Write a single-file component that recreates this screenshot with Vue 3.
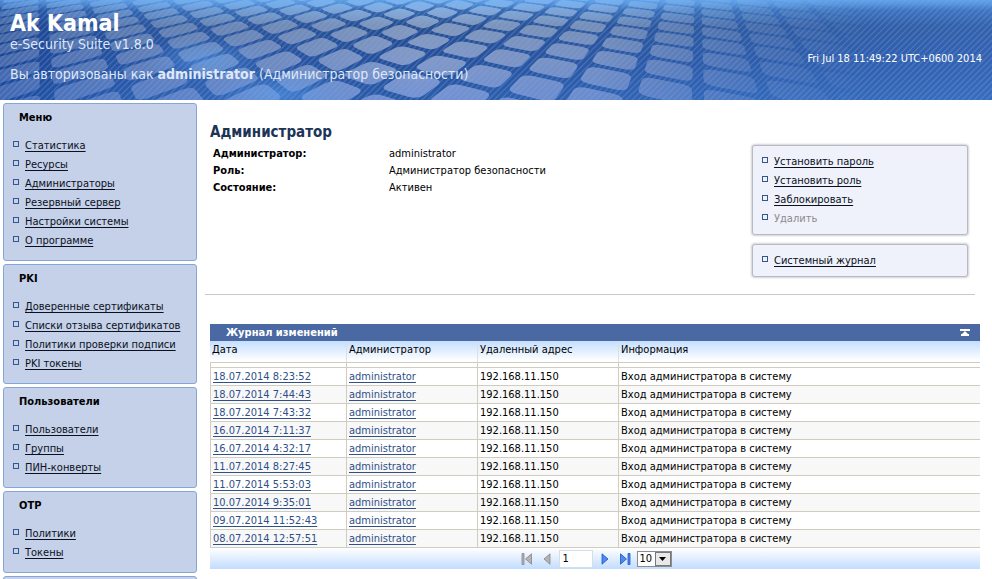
<script setup>
import { ref } from 'vue'

const groups = [
  { title: 'Меню', items: ['Статистика', 'Ресурсы', 'Администраторы', 'Резервный сервер', 'Настройки системы', 'О программе'] },
  { title: 'PKI', items: ['Доверенные сертификаты', 'Списки отзыва сертификатов', 'Политики проверки подписи', 'PKI токены'] },
  { title: 'Пользователи', items: ['Пользователи', 'Группы', 'ПИН-конверты'] },
  { title: 'OTP', items: ['Политики', 'Токены'] },
  { title: '', items: [] },
]

const details = [
  ['Администратор:', 'administrator'],
  ['Роль:', 'Администратор безопасности'],
  ['Состояние:', 'Активен'],
]

const actions = ['Установить пароль', 'Установить роль', 'Заблокировать']

const dates = [
  '18.07.2014 8:23:52', '18.07.2014 7:44:43', '18.07.2014 7:43:32', '16.07.2014 7:11:37', '16.07.2014 4:32:17',
  '11.07.2014 8:27:45', '11.07.2014 5:53:03', '10.07.2014 9:35:01', '09.07.2014 11:52:43', '08.07.2014 12:57:51',
]

const page = ref('1')
const size = ref('10')

// Perspective floor of rounded tiles: two fans of lines, one per vanishing point.
const point = (a, b) => {
  const m = b * 0.335
  const k = 0.05 + 0.4 * a + 0.33 * Math.max(0, m + 1.9)
  const d = 661 / (k - m)
  return [37 + k * d, d - 105]
}
const mix = (p, q, t) => [p[0] + (q[0] - p[0]) * t, p[1] + (q[1] - p[1]) * t]
const fmt = (p) => p[0].toFixed(1) + ' ' + p[1].toFixed(1)
const tiles = []
for (let a = -2; a < 20; a++) {
  for (let b = -20; b < 5; b++) {
    const g = 0.09
    const c = [point(a + g, b + g), point(a + 1 - g, b + g), point(a + 1 - g, b + 1 - g), point(a + g, b + 1 - g)]
    if (c.some((p) => !(p[1] > -12 && p[1] < 220 && p[0] > -150 && p[0] < 1050))) continue
    let d = ''
    c.forEach((p, i) => {
      const prev = c[(i + 3) % 4]
      const next = c[(i + 1) % 4]
      d += (i ? 'L' : 'M') + fmt(mix(p, prev, 0.25)) + 'Q' + fmt(p) + ' ' + fmt(mix(p, next, 0.25))
    })
    tiles.push(d + 'Z')
  }
}
</script>

<template>
  <div class="shell">
    <header class="banner">
      <svg class="art" viewBox="0 0 992 100" preserveAspectRatio="xMinYMin slice" aria-hidden="true">
        <defs>
          <linearGradient id="sky" x1="0" y1="0" x2="0" y2="1">
            <stop offset="0" stop-color="#5c9ce2" />
            <stop offset="0.1" stop-color="#4177bd" />
            <stop offset="0.26" stop-color="#30589b" />
            <stop offset="0.6" stop-color="#2f5aa6" />
            <stop offset="1" stop-color="#3669b8" />
          </linearGradient>
          <linearGradient id="side" x1="0" y1="0" x2="1" y2="0">
            <stop offset="0" stop-color="#0c3284" stop-opacity="0.55" />
            <stop offset="0.2" stop-color="#1c4796" stop-opacity="0.15" />
            <stop offset="0.4" stop-color="#0c2c6c" stop-opacity="0.25" />
            <stop offset="0.75" stop-color="#2a62b4" stop-opacity="0.2" />
            <stop offset="1" stop-color="#3d72c4" stop-opacity="0.35" />
          </linearGradient>
          <linearGradient id="fade" x1="0" y1="0" x2="1" y2="0">
            <stop offset="0" stop-color="#fff" stop-opacity="0.42" />
            <stop offset="0.25" stop-color="#fff" stop-opacity="0.75" />
            <stop offset="0.42" stop-color="#fff" stop-opacity="1" />
            <stop offset="0.6" stop-color="#fff" stop-opacity="0.85" />
            <stop offset="0.76" stop-color="#fff" stop-opacity="0.3" />
            <stop offset="0.88" stop-color="#fff" stop-opacity="0" />
          </linearGradient>
          <linearGradient id="tile" gradientUnits="userSpaceOnUse" x1="0" y1="0" x2="0" y2="100">
            <stop offset="0" stop-color="#8bbcf2" />
            <stop offset="0.25" stop-color="#8498ba" />
            <stop offset="0.6" stop-color="#8499c6" />
            <stop offset="1" stop-color="#7492d2" />
          </linearGradient>
          <radialGradient id="glow">
            <stop offset="0" stop-color="#5da6f5" stop-opacity="0.45" />
            <stop offset="1" stop-color="#5da6f5" stop-opacity="0" />
          </radialGradient>
          <linearGradient id="shine" x1="0" y1="0" x2="0" y2="1">
            <stop offset="0" stop-color="#6cb0f4" stop-opacity="0.6" />
            <stop offset="1" stop-color="#6cb0f4" stop-opacity="0" />
          </linearGradient>
          <mask id="edge"><rect width="992" height="100" fill="url(#fade)" /></mask>
          <pattern id="hatch" width="6" height="6" patternUnits="userSpaceOnUse">
            <path d="M-1 1 1 -1M0 6 6 0M5 7 7 5" stroke="#7aaaf0" stroke-width="1.3" stroke-opacity="0.3" />
          </pattern>
        </defs>
        <rect width="992" height="100" fill="url(#sky)" />
        <rect width="992" height="100" fill="url(#side)" />
        <g mask="url(#edge)" fill="url(#tile)">
          <path v-for="(d, i) in tiles" :key="i" :d="d" />
        </g>
        <ellipse cx="205" cy="60" rx="60" ry="22" fill="url(#glow)" />
        <ellipse cx="280" cy="94" rx="70" ry="24" fill="url(#glow)" />
        <rect width="992" height="10" fill="url(#shine)" />
        <rect width="992" height="100" fill="url(#hatch)" />
      </svg>
      <div class="brand">
        <h1>Ak Kamal</h1>
        <p>e-Security Suite v1.8.0</p>
        <p class="auth">Вы авторизованы как <b>administrator</b> (Администратор безопасности)</p>
      </div>
      <time class="clock">Fri Jul 18 11:49:22 UTC+0600 2014</time>
    </header>

    <div class="body">
      <nav class="side">
        <section v-for="(g, i) in groups" :key="i" class="group">
          <h2>{{ g.title }}</h2>
          <ul class="links">
            <li v-for="t in g.items" :key="t"><a href="#">{{ t }}</a></li>
          </ul>
        </section>
      </nav>

      <main class="main">
        <div class="top">
          <section class="info">
            <h2>Администратор</h2>
            <dl>
              <template v-for="d in details" :key="d[0]">
                <dt>{{ d[0] }}</dt>
                <dd>{{ d[1] }}</dd>
              </template>
            </dl>
          </section>
          <aside class="actions">
            <ul class="links card">
              <li v-for="t in actions" :key="t"><a href="#">{{ t }}</a></li>
              <li class="off">Удалить</li>
            </ul>
            <ul class="links card">
              <li><a href="#">Системный журнал</a></li>
            </ul>
          </aside>
        </div>

        <section class="log">
          <div class="bar">
            <h3>Журнал изменений</h3>
            <button type="button" aria-label="Свернуть">
              <svg width="10" height="8" viewBox="0 0 10 8"><path d="M0 0h10v2H0zM5 2 8 5h1v2H1V5h1z" fill="#fff" /></svg>
            </button>
          </div>
          <table>
            <colgroup><col class="c1" /><col class="c2" /><col class="c3" /><col /></colgroup>
            <thead>
              <tr><th>Дата</th><th>Администратор</th><th>Удаленный адрес</th><th>Информация</th></tr>
            </thead>
            <tbody>
              <tr class="gap"><td></td><td></td><td></td><td></td></tr>
              <tr v-for="d in dates" :key="d" class="row">
                <td><a href="#">{{ d }}</a></td>
                <td><a href="#">administrator</a></td>
                <td>192.168.11.150</td>
                <td>Вход администратора в систему</td>
              </tr>
            </tbody>
          </table>
          <div class="pager">
            <button type="button" aria-label="Первая" disabled>
              <svg width="12" height="12" viewBox="0 0 12 12"><path d="M1 .5h2v11H1zM10.500.8v10.400L4.500 6z" fill="#b4b4b4" stroke="#858585" stroke-width=".8" /></svg>
            </button>
            <button type="button" aria-label="Предыдущая" disabled>
              <svg width="12" height="12" viewBox="0 0 12 12"><path d="M9 .8v10.400L3 6z" fill="#b4b4b4" stroke="#858585" stroke-width=".8" /></svg>
            </button>
            <input v-model="page" type="text" aria-label="Страница" />
            <button type="button" aria-label="Следующая">
              <svg width="12" height="12" viewBox="0 0 12 12"><path d="M3 .8v10.400L9 6z" fill="#4f8bef" stroke="#1d55c4" stroke-width=".8" /></svg>
            </button>
            <button type="button" aria-label="Последняя">
              <svg width="12" height="12" viewBox="0 0 12 12"><path d="M1.500.8v10.400L7.500 6zM9 .5h2v11H9z" fill="#4f8bef" stroke="#1d55c4" stroke-width=".8" /></svg>
            </button>
            <span class="size">
              <select v-model="size" aria-label="Строк на странице"><option>10</option><option>20</option><option>50</option></select>
              <span class="drop"><svg width="7" height="4" viewBox="0 0 7 4"><path d="M0 0h7L3.500 4z" fill="#000" /></svg></span>
            </span>
          </div>
        </section>
      </main>
    </div>
  </div>
</template>

<style>
body {
  background: #fff;
}
</style>

<style scoped>
.shell {
  height: 100vh;
  overflow: hidden;
  font: 11px/18px Tahoma, "DejaVu Sans Condensed", "DejaVu Sans", sans-serif;
  color: #000;
}
.shell * {
  box-sizing: border-box;
}
h1, h2, h3, p, ul, dl, dd {
  margin: 0;
  padding: 0;
}
button {
  display: flex;
  justify-content: center;
  padding: 0;
  border: 0;
  background: none;
}
.banner {
  position: relative;
  display: flex;
  justify-content: space-between;
  align-items: flex-start;
  min-height: 100px;
  padding: 10px;
  background: #3a6ab8;
}
.art {
  position: absolute;
  inset: 0;
  width: 100%;
  height: 100%;
}
.brand {
  position: relative;
  color: #dfe8f8;
  font-size: 14px;
}
.brand h1 {
  color: #fff;
  font-size: 23px;
  line-height: 26px;
}
.brand p {
  line-height: 16px;
}
.brand .auth {
  padding-top: 14px;
}
.clock {
  position: relative;
  padding-top: 40px;
  color: #fff;
}
.body {
  display: flex;
  gap: 8px;
}
.side {
  display: flex;
  flex-direction: column;
  flex: 0 0 197px;
  gap: 3px;
  padding: 3px 0 0 3px;
}
.group {
  padding: 5px 9px 10px;
  border: 1px solid #86a5dc;
  border-radius: 3px;
  background: #c4d1e9;
}
.group h2 {
  height: 18px;
  margin-bottom: 9px;
  padding-left: 6px;
  font-size: 11px;
  line-height: 18px;
}
.links {
  list-style: none;
}
.links li {
  display: flex;
  gap: 6px;
  height: 19px;
  line-height: 19px;
}
.links li::before {
  content: "";
  box-sizing: border-box;
  width: 6px;
  height: 6px;
  margin-top: 5px;
  border: 1px solid #34568f;
}
.links a {
  color: #0b1020;
  text-underline-offset: 2px;
}
.main {
  flex: 1;
  min-width: 0;
}
.top {
  display: flex;
  justify-content: space-between;
  margin-right: 17px;
  padding: 22px 7px 17px 5px;
  border-bottom: 1px solid #c9c9c9;
}
.info h2 {
  margin-bottom: 3px;
  color: #1c3456;
  font-size: 15px;
  line-height: 20px;
}
.info dl {
  display: grid;
  grid-template-columns: 176px auto;
  padding-left: 3px;
  line-height: 17px;
}
.info dt {
  font-weight: bold;
}
.actions {
  display: flex;
  flex-direction: column;
  flex: 0 0 216px;
  gap: 9px;
  padding-top: 23px;
}
.card {
  padding: 6px 9px;
  border: 1px solid #b9b9c6;
  border-radius: 3px;
  background: #eff2fb;
  box-shadow: 0 0 2px 1px #d2d2d2;
}
.off {
  color: #8b8b8b;
}
.log {
  margin: 29px 12px 0 5px;
}
.bar {
  display: flex;
  justify-content: space-between;
  align-items: center;
  height: 17px;
  padding: 0 10px 0 16px;
  background: #4a69a2;
  color: #fff;
}
.bar h3 {
  font-size: 11px;
  line-height: 17px;
}
table {
  width: 100%;
  border-collapse: separate;
  border-spacing: 0;
  table-layout: fixed;
}
.c1 { width: 137px; }
.c2 { width: 131px; }
.c3 { width: 141px; }
th, td {
  padding: 0 2px;
  border-right: 1px solid #d0ccc0;
  border-bottom: 1px solid #d0ccc0;
  text-align: left;
  font-weight: normal;
  white-space: nowrap;
}
td:first-child {
  border-left: 1px solid #d0ccc0;
}
th:last-child, td:last-child {
  border-right: 0;
}
th {
  height: 22px;
  padding-bottom: 3px;
  border-right-color: #d8e0e8;
}
thead {
  background: linear-gradient(#c4deff, #fff 90%);
}
.gap td {
  height: 5px;
}
.row td {
  height: 18px;
  line-height: 17px;
}
.row:nth-child(odd) td {
  background: #f8f8f8;
}
.row a {
  color: #2f4f88;
  text-underline-offset: 2px;
}
.pager {
  display: flex;
  justify-content: center;
  align-items: center;
  gap: 4px;
  height: 21px;
  background: linear-gradient(#fff, #c2dcff);
}
.pager button {
  width: 16px;
}
.pager input {
  width: 34px;
  height: 18px;
  padding: 0 3px;
  border: 1px solid #d5dde8;
  background: #fff;
  font: inherit;
}
.size {
  display: flex;
  height: 16px;
  border: 1px solid #8c8c8c;
  background: #fff;
}
.size select {
  width: 17px;
  padding: 0 0 0 2px;
  border: 0;
  appearance: none;
  background: none;
  font: 11px/14px "DejaVu Sans Condensed", sans-serif;
  color: #000;
}
.drop {
  display: flex;
  justify-content: center;
  align-items: center;
  width: 16px;
  border: 1px solid #777;
  background: #e8e8e8;
}
</style>
